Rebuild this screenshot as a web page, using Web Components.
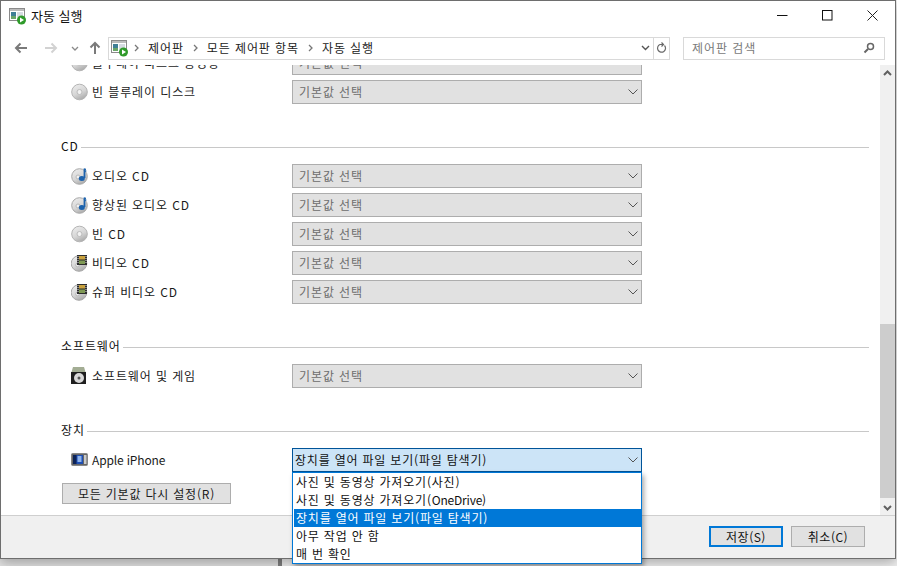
<!DOCTYPE html>
<html lang="ko">
<head>
<meta charset="utf-8">
<title>자동 실행</title>
<style>
  html, body { margin: 0; height: 100%; }
  body {
    background: linear-gradient(90deg, #e4e4e4 0, #e4e4e4 278px, #808080 278px, #808080 282px, #f2f2f2 282px);
    font: 12px/15px "Noto Sans CJK KR", "Noto Sans", sans-serif;
    color: #1a1a1a;
    overflow: hidden;
  }
</style>
</head>
<body>
<autoplay-window>
  <title-bar slot="top"></title-bar>
  <nav-bar slot="top"></nav-bar>
  <scroll-pane>
    <play-row label="블루레이 디스크 동영상" icon="blank"></play-row>
    <play-row label="빈 블루레이 디스크" icon="blank"></play-row>

    <play-section label="CD">
      <play-row label="오디오 CD" icon="music"></play-row>
      <play-row label="향상된 오디오 CD" icon="music"></play-row>
      <play-row label="빈 CD" icon="blank"></play-row>
      <play-row label="비디오 CD" icon="film"></play-row>
      <play-row label="슈퍼 비디오 CD" icon="film"></play-row>
    </play-section>

    <play-section label="소프트웨어">
      <play-row label="소프트웨어 및 게임" icon="software"></play-row>
    </play-section>

    <play-section label="장치">
      <play-row label="Apple iPhone" latin icon="device" value="장치를 열어 파일 보기(파일 탐색기)" open></play-row>
    </play-section>

    <reset-button>모든 기본값 다시 설정(R)</reset-button>
  </scroll-pane>
  <dialog-footer slot="bottom"></dialog-footer>
  <combo-menu slot="overlay" selected="2"></combo-menu>
</autoplay-window>

<script>
const APP_ICON = `
  <svg width="18" height="18" viewBox="0 0 18 18">
    <rect x="0.5" y="1.5" width="15" height="12" fill="#fff" stroke="#8a8a8a"/>
    <rect x="1" y="2" width="14" height="2" fill="#bcbcbc"/>
    <rect x="2" y="5" width="5" height="7" fill="#3f7f96"/>
    <rect x="2" y="9" width="5" height="3" fill="#6aa56a"/>
    <path d="M8 6h6M8 8h6M8 10h3" stroke="#aeb8c4"/>
    <circle cx="12.5" cy="13" r="4.5" fill="#2f9a2a"/>
    <path d="M11 10.5v5l4-2.500z" fill="#fff"/>
  </svg>`;

const DISC_FILL = `
  <defs>
    <linearGradient id="silver" x1="0.2" y1="0" x2="0.7" y2="1">
      <stop offset="0" stop-color="#ececec"/>
      <stop offset="0.55" stop-color="#d6d6d6"/>
      <stop offset="1" stop-color="#a8a8a8"/>
    </linearGradient>
  </defs>`;

const ICONS = {
  blank: `
    <svg width="18" height="18" viewBox="0 0 18 18">${DISC_FILL}
      <circle cx="8.500" cy="9" r="7.800" fill="url(#silver)" stroke="#b4b4b4"/>
      <circle cx="8.500" cy="9" r="2.500" fill="#f2f2f2" stroke="#bcbcbc"/>
    </svg>`,
  music: `
    <svg width="18" height="18" viewBox="0 0 18 18">${DISC_FILL}
      <circle cx="8.500" cy="9.500" r="7.800" fill="url(#silver)" stroke="#a8a8a8"/>
      <circle cx="7" cy="10" r="2" fill="#f2f2f2" stroke="#b8b8b8"/>
      <path d="M13.500 1.500v9.500" stroke="#1d63ad" stroke-width="1.800"/>
      <path d="M14 1.500q1 1.500 .8 3.500" stroke="#1d63ad" fill="none"/>
      <ellipse cx="10.800" cy="11.500" rx="3" ry="2.500" fill="#1d63ad"/>
    </svg>`,
  film: `
    <svg width="18" height="18" viewBox="0 0 18 18">${DISC_FILL}
      <circle cx="8" cy="9.500" r="7.800" fill="url(#silver)" stroke="#a8a8a8"/>
      <circle cx="6.500" cy="11" r="1.800" fill="#f2f2f2" stroke="#b8b8b8"/>
      <rect x="6" y="1" width="10" height="10" fill="#2d2d2d"/>
      <rect x="8" y="2" width="6" height="3.500" fill="#c9a13c"/>
      <rect x="8" y="6.500" width="6" height="3.500" fill="#7f9a54"/>
      <path d="M7 2v8M15 2v8" stroke="#e0e0e0" stroke-dasharray="1 1"/>
    </svg>`,
  software: `
    <svg width="16" height="17" viewBox="0 0 16 17">
      <path d="M2 0h11l1.500 5H.5z" fill="#a3ad94"/>
      <rect x="0" y="5" width="15" height="12" fill="#1f1f1f"/>
      <circle cx="8" cy="11" r="5" fill="#d8d8d8"/>
      <circle cx="8" cy="11" r="1.500" fill="#555"/>
    </svg>`,
  device: `
    <svg width="17" height="14" viewBox="0 0 17 14">
      <rect x="0.500" y="0.500" width="16" height="12" rx="1" fill="#666" stroke="#888"/>
      <rect x="2" y="2" width="10" height="9" fill="#1e4fb4"/>
      <rect x="2" y="2" width="3.500" height="9" fill="#0c2358"/>
      <rect x="6.500" y="3" width="4" height="6" fill="#8fb4ea"/>
      <rect x="13" y="2" width="2.500" height="9" fill="#c9c9c9"/>
    </svg>`
};

const CHEVRON = `<svg width="10" height="6" viewBox="0 0 10 6"><path d="M.5.5 5 5 9.500.5" fill="none" stroke="#555" stroke-width="1"/></svg>`;

class AutoplayWindow extends HTMLElement {
  constructor() {
    super();
    this.attachShadow({ mode: 'open' });
    this.shadowRoot.innerHTML = `
      <style>
        :host {
          display: flex;
          flex-direction: column;
          position: relative;
          box-sizing: border-box;
          width: 896px;
          height: 559px;
          background: #fff;
          border: 1px solid #6e6e6e;
          box-shadow: 0 4px 12px rgba(0, 0, 0, 0.3);
        }
      </style>
      <slot name="top"></slot>
      <slot></slot>
      <slot name="bottom"></slot>
      <slot name="overlay"></slot>
    `;
  }
}

class TitleBar extends HTMLElement {
  constructor() {
    super();
    this.attachShadow({ mode: 'open' });
    this.shadowRoot.innerHTML = `
      <style>
        :host { display: flex; align-items: center; box-sizing: border-box; height: 30px; padding: 0 0 1px 8px; }
        .icon { display: flex; margin-right: 4px; }
        .title { font-size: 13px; color: #111; flex: 1; }
        .btn { width: 45px; height: 29px; display: flex; align-items: center; justify-content: center; }
        svg { display: block; }
      </style>
      <span class="icon">${APP_ICON}</span>
      <span class="title">자동 실행</span>
      <span class="btn"><svg width="11" height="11"><path d="M0 5.500h10.500" stroke="#111"/></svg></span>
      <span class="btn"><svg width="11" height="11"><rect x=".5" y=".5" width="9.500" height="9.500" fill="none" stroke="#111"/></svg></span>
      <span class="btn"><svg width="11" height="11"><path d="M.5.500 10.500 10.500M10.500.500.5 10.500" stroke="#222"/></svg></span>
    `;
  }
}

class NavBar extends HTMLElement {
  constructor() {
    super();
    this.attachShadow({ mode: 'open' });
    const sep = `<svg width="5" height="8"><path d="M1 1l3 3-3 3" fill="none" stroke="#777" stroke-width="1.300"/></svg>`;
    this.shadowRoot.innerHTML = `
      <style>
        :host { display: flex; align-items: center; height: 34px; padding-left: 13px; }
        svg { display: block; flex: none; }
        .nav { display: flex; align-items: center; }
        .address {
          box-sizing: border-box;
          display: flex;
          align-items: center;
          width: 562px;
          height: 23px;
          border: 1px solid #d9d9d9;
          padding-left: 2px;
          color: #222;
        }
        .crumb { letter-spacing: 0.9px; margin: 0 9px 2px 9px; }
        .grow { flex: 1; }
        .drop { width: 15px; display: flex; justify-content: center; }
        .refresh { width: 15px; height: 21px; border-left: 1px solid #d9d9d9; display: flex; align-items: center; justify-content: center; }
        .search {
          box-sizing: border-box;
          display: flex;
          align-items: center;
          justify-content: space-between;
          width: 202px;
          height: 23px;
          margin-left: 13px;
          border: 1px solid #d9d9d9;
          padding: 0 9px 0 8px;
          color: #7a7a7a;
          letter-spacing: 0.95px;
        }
        .search span { margin-bottom: 2px; }
      </style>
      <span class="nav" style="width:30px"><svg width="14" height="12"><path d="M13 6H2M6.500 1.500 2 6l4.500 4.500" fill="none" stroke="#7a7a7a" stroke-width="2"/></svg></span>
      <span class="nav" style="width:27px"><svg width="14" height="12"><path d="M1 6h11M7.500 1.500 12 6l-4.500 4.500" fill="none" stroke="#d2d2d2" stroke-width="2"/></svg></span>
      <span class="nav" style="width:18px"><svg width="8" height="5"><path d="M1 1l3 3 3-3" fill="none" stroke="#8a8a8a" stroke-width="1.300"/></svg></span>
      <span class="nav" style="width:19px"><svg width="12" height="14"><path d="M6 13V2M1.500 6.500 6 2l4.500 4.500" fill="none" stroke="#7a7a7a" stroke-width="2"/></svg></span>
      <div class="address">
        ${APP_ICON}
        <span style="margin-left:5px"></span>${sep}
        <span class="crumb">제어판</span>${sep}
        <span class="crumb">모든 제어판 항목</span>${sep}
        <span class="crumb">자동 실행</span>
        <span class="grow"></span>
        <span class="drop"><svg width="9" height="6"><path d="M1 1l3.500 3.500L8 1" fill="none" stroke="#555" stroke-width="1.400"/></svg></span>
        <span class="refresh"><svg width="11" height="12" viewBox="0 0 11 12"><path d="M8.500 3.500A4 4 0 1 1 4 2.500H7M5.500.5 7.500 2.500 5.500 4.500" fill="none" stroke="#6a6a6a" stroke-width="1.200"/></svg></span>
      </div>
      <div class="search">
        <span>제어판 검색</span>
        <svg width="12" height="12"><circle cx="7.500" cy="4.500" r="3" fill="none" stroke="#666" stroke-width="1.500"/><path d="M5 7 1.500 10.500" stroke="#666" stroke-width="2"/></svg>
      </div>
    `;
  }
}

class ScrollPane extends HTMLElement {
  constructor() {
    super();
    this.attachShadow({ mode: 'open' });
    this.shadowRoot.innerHTML = `
      <style>
        :host { display: flex; flex: 1; min-height: 0; border-bottom: 1px solid #cfcfcf; }
        .view { flex: 1; min-width: 0; overflow: hidden; }
        .content { margin-top: -14px; padding: 0 11px 0 60px; }
        .bar { width: 15px; background: #f0f0f0; display: flex; flex-direction: column; align-items: center; }
        .arrow { height: 15px; display: flex; align-items: center; justify-content: center; flex: none; }
        .track { flex: 1; display: flex; flex-direction: column; justify-content: flex-end; }
        .thumb { width: 15px; height: 174px; margin-bottom: 2px; background: #cdcdcd; }
        svg { display: block; }
      </style>
      <div class="view"><div class="content"><slot></slot></div></div>
      <div class="bar">
        <span class="arrow"><svg width="9" height="6"><path d="M1 5l3.500-3.500L8 5" fill="none" stroke="#606060" stroke-width="2"/></svg></span>
        <span class="track"><span class="thumb"></span></span>
        <span class="arrow"><svg width="9" height="6"><path d="M1 1l3.500 3.500L8 1" fill="none" stroke="#606060" stroke-width="2"/></svg></span>
      </div>
    `;
  }
}

class PlaySection extends HTMLElement {
  constructor() {
    super();
    this.attachShadow({ mode: 'open' });
    const label = this.getAttribute('label');
    this.shadowRoot.innerHTML = `
      <style>
        :host { display: block; margin-top: 31px; }
        .head { display: flex; align-items: center; height: 20px; margin-bottom: 9px; color: #111; }
        .label { letter-spacing: 0.9px; margin-right: 2px; }
        .rule { flex: 1; height: 1px; background: #c8c8c8; margin-top: 4px; }
      </style>
      <div class="head"><span class="label">${label}</span><span class="rule"></span></div>
      <slot></slot>
    `;
  }
}

class PlayRow extends HTMLElement {
  constructor() {
    super();
    this.attachShadow({ mode: 'open' });
    const label = this.getAttribute('label');
    const icon = ICONS[this.getAttribute('icon')];
    const value = this.getAttribute('value') || '기본값 선택';
    const open = this.hasAttribute('open');
    const spacing = this.hasAttribute('latin') ? '-0.15px' : '0.9px';
    this.shadowRoot.innerHTML = `
      <style>
        :host { display: flex; align-items: center; height: 24px; margin-bottom: 5px; padding-left: 10px; }
        .icon { width: 21px; display: flex; align-items: center; margin-bottom: 1px; }
        .label { width: 200px; margin-bottom: 2px; letter-spacing: ${spacing}; color: #1a1a1a; }
        .select {
          box-sizing: border-box;
          display: flex;
          align-items: center;
          justify-content: space-between;
          width: 350px;
          height: 24px;
          background: #e1e1e1;
          border: 1px solid #adadad;
          padding: 0 3px 0 6px;
          color: #6d6d6d;
          letter-spacing: 0.9px;
        }
        .select span { margin-bottom: 2px; }
        .select.open {
          background: #cce4f7;
          border-color: #005499;
          color: #111;
          padding-left: 2px;
          letter-spacing: 0.8px;
        }
      </style>
      <span class="icon">${icon}</span>
      <span class="label">${label}</span>
      <div class="select ${open ? 'open' : ''}"><span>${value}</span>${CHEVRON}</div>
    `;
  }
}

class ComboMenu extends HTMLElement {
  constructor() {
    super();
    this.attachShadow({ mode: 'open' });
    const selected = Number(this.getAttribute('selected'));
    const options = [
      '사진 및 동영상 가져오기(사진)',
      '사진 및 동영상 가져오기(<span class="latin">OneDrive</span>)',
      '장치를 열어 파일 보기(파일 탐색기)',
      '아무 작업 안 함',
      '매 번 확인'
    ];
    this.shadowRoot.innerHTML = `
      <style>
        :host {
          position: absolute;
          left: 291px;
          top: 471px;
          box-sizing: border-box;
          width: 350px;
          background: #fff;
          border: 1px solid #0078d7;
          padding-left: 1px;
          box-shadow: 2px 3px 5px rgba(0, 0, 0, 0.35);
        }
        .opt { height: 18px; line-height: 18px; padding-left: 2px; letter-spacing: 0.8px; color: #111; }
        .opt.on { background: #0078d7; color: #fff; }
        .latin { letter-spacing: -0.2px; }
      </style>
      ${options.map((o, i) => `<div class="opt ${i === selected ? 'on' : ''}">${o}</div>`).join('')}
    `;
  }
}

class ResetButton extends HTMLElement {
  constructor() {
    super();
    this.attachShadow({ mode: 'open' });
    this.shadowRoot.innerHTML = `
      <style>
        :host {
          display: flex;
          align-items: center;
          justify-content: center;
          box-sizing: border-box;
          width: 169px;
          height: 21px;
          margin: 11px 0 0 1px;
          background: #e1e1e1;
          border: 1px solid #adadad;
          letter-spacing: 0.8px;
          color: #1a1a1a;
        }
      </style>
      <slot></slot>
    `;
  }
}

class DialogFooter extends HTMLElement {
  constructor() {
    super();
    this.attachShadow({ mode: 'open' });
    this.shadowRoot.innerHTML = `
      <style>
        :host {
          display: flex;
          justify-content: flex-end;
          align-items: center;
          gap: 8px;
          box-sizing: border-box;
          height: 42px;
          padding: 0 30px 1px 0;
          background: #f0f0f0;
        }
        .btn {
          box-sizing: border-box;
          display: flex;
          align-items: center;
          justify-content: center;
          width: 74px;
          height: 21px;
          background: #e1e1e1;
          border: 1px solid #adadad;
          letter-spacing: 0.5px;
          color: #111;
        }
        .btn.def { border: 2px solid #0078d7; }
      </style>
      <span class="btn def">저장(S)</span>
      <span class="btn">취소(C)</span>
    `;
  }
}

customElements.define('autoplay-window', AutoplayWindow);
customElements.define('title-bar', TitleBar);
customElements.define('nav-bar', NavBar);
customElements.define('scroll-pane', ScrollPane);
customElements.define('play-section', PlaySection);
customElements.define('play-row', PlayRow);
customElements.define('combo-menu', ComboMenu);
customElements.define('reset-button', ResetButton);
customElements.define('dialog-footer', DialogFooter);
</script>
</body>
</html>
